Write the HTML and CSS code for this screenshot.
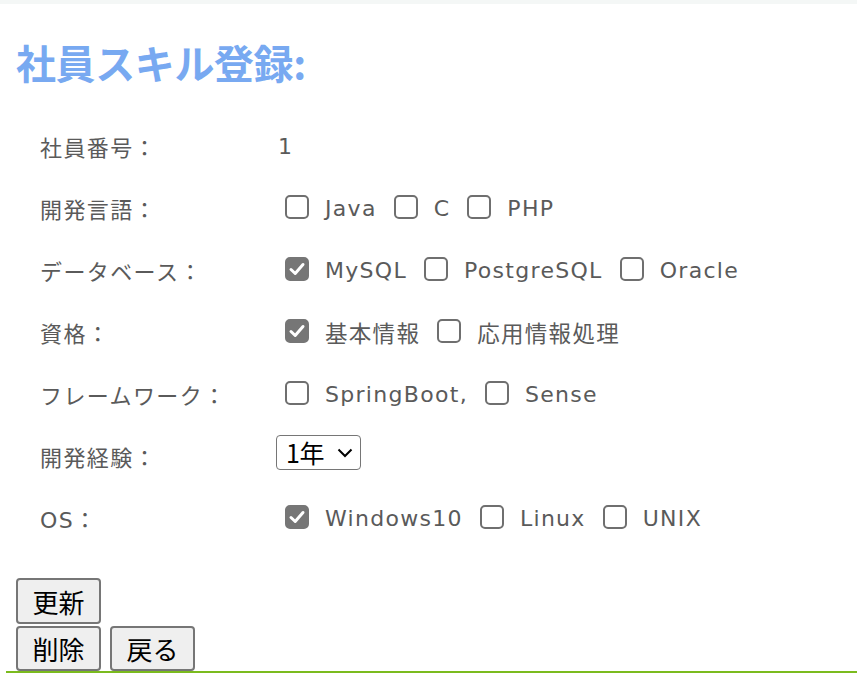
FILE: index.html
```html
<!DOCTYPE html>
<html lang="ja">
<head>
<meta charset="utf-8">
<title>社員スキル登録</title>
<link rel="stylesheet" href="styles.css">
</head>
<body>
<div class="topbar"></div>
<main class="page">
  <h1 class="title">社員スキル登録:</h1>
  <div class="form">
    <div class="label">社員番号：</div>
    <div class="value"><span class="num">1</span></div>

    <div class="label">開発言語：</div>
    <div class="value">
      <label class="opt"><span class="box"></span><span>Java</span></label>
      <label class="opt"><span class="box"></span><span>C</span></label>
      <label class="opt"><span class="box"></span><span>PHP</span></label>
    </div>

    <div class="label">データベース：</div>
    <div class="value">
      <label class="opt"><span class="box checked"><svg viewBox="0 0 24 24" width="24" height="24"><path d="M6 12.5 L10.2 16.5 L18 7.5" fill="none" stroke="#fff" stroke-width="3" stroke-linecap="round" stroke-linejoin="round"/></svg></span><span>MySQL</span></label>
      <label class="opt"><span class="box"></span><span>PostgreSQL</span></label>
      <label class="opt"><span class="box"></span><span>Oracle</span></label>
    </div>

    <div class="label">資格：</div>
    <div class="value">
      <label class="opt"><span class="box checked"><svg viewBox="0 0 24 24" width="24" height="24"><path d="M6 12.5 L10.2 16.5 L18 7.5" fill="none" stroke="#fff" stroke-width="3" stroke-linecap="round" stroke-linejoin="round"/></svg></span><span class="ja">基本情報</span></label>
      <label class="opt"><span class="box"></span><span class="ja">応用情報処理</span></label>
    </div>

    <div class="label">フレームワーク：</div>
    <div class="value">
      <label class="opt"><span class="box"></span><span>SpringBoot,</span></label>
      <label class="opt"><span class="box"></span><span>Sense</span></label>
    </div>

    <div class="label">開発経験：</div>
    <div class="value">
      <div class="select">
        <span>1年</span>
        <svg class="chev" width="16" height="10" viewBox="0 0 16 10"><path d="M1.5 1.5 L8 8 L14.5 1.5" fill="none" stroke="#000" stroke-width="2"/></svg>
      </div>
    </div>

    <div class="label">OS：</div>
    <div class="value">
      <label class="opt"><span class="box checked"><svg viewBox="0 0 24 24" width="24" height="24"><path d="M6 12.5 L10.2 16.5 L18 7.5" fill="none" stroke="#fff" stroke-width="3" stroke-linecap="round" stroke-linejoin="round"/></svg></span><span>Windows10</span></label>
      <label class="opt"><span class="box"></span><span>Linux</span></label>
      <label class="opt"><span class="box"></span><span>UNIX</span></label>
    </div>
  </div>

  <div class="buttons">
    <div class="btn-row"><button class="btn">更新</button></div>
    <div class="btn-row"><button class="btn">削除</button><button class="btn">戻る</button></div>
  </div>
</main>
<div class="footer-line"></div>
</body>
</html>
```

FILE: styles.css
```css
html, body {
  margin: 0;
  padding: 0;
  background: #ffffff;
}

body {
  font-family: "DejaVu Sans", "Noto Sans CJK JP", sans-serif;
  color: #5a5a5a;
  height: 673px;
  overflow: hidden;
}

.topbar {
  height: 4px;
  background: #f4f7f6;
}

.page {
  padding: 0 16px;
}

.title {
  margin: 35px 0 0 0;
  height: 46px;
  line-height: 46px;
  font-family: "Noto Sans CJK JP", sans-serif;
  font-size: 40px;
  font-weight: 700;
  color: #78a9f1;
  letter-spacing: -0.4px;
}

.form {
  margin-top: 30px;
  display: grid;
  grid-template-columns: 260px auto;
  grid-auto-rows: 62px;
  align-items: center;
}

.label {
  padding-left: 24px;
  font-size: 22px;
  letter-spacing: 1.4px;
}

.value {
  display: flex;
  align-items: center;
  font-size: 22px;
  letter-spacing: 1.3px;
}

.ja {
  font-size: 22.5px;
  letter-spacing: 1.3px;
}

.num {
  padding-left: 2px;
}

.opt {
  display: flex;
  align-items: center;
  margin-right: 8px;
}

.box {
  display: flex;
  align-items: center;
  justify-content: center;
  box-sizing: border-box;
  width: 24px;
  height: 24px;
  margin: -3px 16px 0 9px;
  border: 2px solid #6f6f6f;
  border-radius: 5px;
  background: #fff;
}

.box.checked {
  background: #767676;
  border-color: #767676;
}

.box svg {
  flex: none;
}

.select {
  display: flex;
  align-items: center;
  height: 35px;
  box-sizing: border-box;
  width: 85px;
  margin-bottom: 8px;
  padding: 0 7px 0 9px;
  border: 1.5px solid #767676;
  border-radius: 4px;
  color: #000;
  font-family: "Noto Sans CJK JP", sans-serif;
  font-size: 25px;
  letter-spacing: -0.5px;
  justify-content: space-between;
}

.chev {
  margin-top: 2px;
}

.buttons {
  margin-top: 29px;
  display: flex;
  flex-direction: column;
  gap: 2px;
}

.btn-row {
  display: flex;
  gap: 9px;
}

.btn {
  width: 85px;
  height: 46px;
  padding: 0;
  background: #efefef;
  border: 2px solid #767676;
  border-radius: 4px;
  color: #000;
  font-family: "Noto Sans CJK JP", sans-serif;
  font-size: 26px;
}

.btn-row + .btn-row .btn {
  height: 45px;
}

.footer-line {
  margin-left: 6px;
  height: 2px;
  background: #7bbb1e;
}
```
